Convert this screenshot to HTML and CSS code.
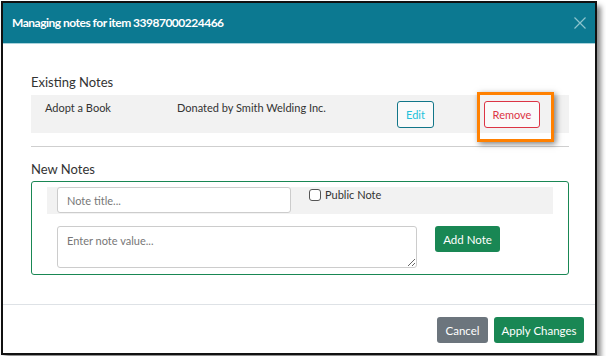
FILE: index.html
```html
<!DOCTYPE html>
<html lang="en">
<head>
    <meta charset="UTF-8">
    <title>Managing notes</title>
    <link rel="stylesheet" href="styles.css">
</head>
<body>
    <div class="nt-modal">
        <div class="nt-header">
            <h1 class="nt-title">Managing notes for item 33987000224466</h1>
            <svg class="nt-close" width="12" height="12" viewBox="0 0 12 12">
                <path d="M0.5 0.5 L11.5 11.5 M11.5 0.5 L0.5 11.5" stroke="#8cc4ce" stroke-width="1.2" fill="none"/>
            </svg>
        </div>

        <div class="nt-body">
            <h2 class="nt-label">Existing Notes</h2>
            <div class="nt-note-row">
                <span class="nt-cell">Adopt a Book</span>
                <span class="nt-cell">Donated by Smith Welding Inc.</span>
                <div><button class="nt-btn nt-btn-edit">Edit</button></div>
                <div><button class="nt-btn nt-btn-remove">Remove</button></div>
            </div>
            <hr class="nt-rule">

            <h2 class="nt-label">New Notes</h2>
            <div class="nt-new-box">
                <div class="nt-new-top">
                    <input type="text" class="nt-input" placeholder="Note title...">
                    <label class="nt-check">
                        <span class="nt-checkbox"></span>
                        Public Note
                    </label>
                </div>
                <div class="nt-new-bottom">
                    <textarea class="nt-textarea" placeholder="Enter note value..."></textarea>
                    <button class="nt-btn nt-btn-add">Add Note</button>
                </div>
            </div>
        </div>

        <div class="nt-footer">
            <button class="nt-btn nt-btn-cancel">Cancel</button>
            <button class="nt-btn nt-btn-apply">Apply Changes</button>
        </div>
    </div>
</body>
</html>
```

FILE: styles.css
```css
:root {
    --nt-teal: #0c7991;
    --nt-green: #198754;
    --nt-gray: #6c757d;
    --nt-row: #f2f2f2;
    --nt-text: #333;
}

* {
    margin: 0;
    padding: 0;
    box-sizing: border-box;
}

body {
    font-family: Lato, "Open Sans", Arial, sans-serif;
    background: #fff;
    color: var(--nt-text);
    padding: 1px;
}

.nt-modal {
    width: 596px;
    height: 354px;
    border: 2px solid #111;
    background: #fff;
    box-shadow: 4px 5px 5px rgba(0,0,0,0.45);
    display: flex;
    flex-direction: column;
}

.nt-header {
    height: 41px;
    background: var(--nt-teal);
    border-bottom: 1px solid #a9d3dc;
    display: flex;
    align-items: center;
    justify-content: space-between;
    padding: 0 9px 1px 9px;
}

.nt-title {
    font-size: 12px;
    font-weight: 700;
    letter-spacing: -0.5px;
    color: #fff;
}

.nt-close {
    margin-right: 0;
}

.nt-body {
    padding: 29px 26px 0 28px;
    flex: 1;
    border-bottom: 1px solid #dee2e6;
}

.nt-label {
    font-size: 13px;
    font-weight: 400;
    line-height: 18px;
    color: var(--nt-text);
    margin-bottom: 4px;
}

.nt-note-row {
    background: var(--nt-row);
    height: 38px;
    padding: 6px 0 0 14px;
    display: grid;
    grid-template-columns: 132px 220px 87px 1fr;
    font-size: 11px;
    line-height: 14px;
}

.nt-btn {
    font-family: inherit;
    font-size: 11px;
    border-radius: 3px;
    cursor: pointer;
}

.nt-btn-edit {
    width: 37px;
    height: 27px;
    background: #fafafa;
    border: 1px solid #127689;
    color: #23c2db;
}

.nt-btn-remove {
    position: relative;
    width: 56px;
    height: 27px;
    background: #fafafa;
    border: 1px solid #dc3545;
    color: #dc3545;
}

/* highlight frame around the remove button */
.nt-btn-remove::after {
    content: '';
    position: absolute;
    left: -8px;
    top: -10px;
    width: 71px;
    height: 44px;
    border: 3px solid #ff8000;
    box-shadow: 2px 2px 6px rgba(0,0,0,0.5);
}

.nt-rule {
    border: none;
    border-top: 1px solid #cfcfcf;
    margin: 13px 0 13px 0;
}

.nt-new-box {
    margin-top: -1px;
    height: 94px;
    border: 1px solid var(--nt-green);
    border-radius: 3px;
    padding: 5px 15px 0 15px;
}

.nt-new-top {
    background: var(--nt-row);
    height: 27px;
    padding-left: 10px;
    display: flex;
    align-items: flex-start;
    gap: 18px;
}

.nt-input {
    width: 234px;
    height: 26px;
    border: 1px solid #ccc;
    border-radius: 3px;
    padding: 0 9px;
    font-family: inherit;
    font-size: 11px;
    color: var(--nt-text);
}

.nt-input::placeholder,
.nt-textarea::placeholder {
    color: #777;
}

.nt-check {
    display: flex;
    align-items: center;
    gap: 4px;
    font-size: 11px;
    margin-top: 1px;
    line-height: 14px;
}

.nt-checkbox {
    width: 12px;
    height: 12px;
    border: 1px solid #555;
    border-radius: 3px;
    background: #fff;
}

.nt-new-bottom {
    display: flex;
    align-items: flex-start;
    gap: 18px;
    padding-left: 10px;
    margin-top: 12px;
}

.nt-textarea {
    width: 360px;
    height: 42px;
    border: 1px solid #ccc;
    border-radius: 3px;
    padding: 7px 9px;
    font-family: inherit;
    font-size: 11px;
    resize: both;
}

.nt-btn-add {
    width: 65px;
    height: 26px;
    background: var(--nt-green);
    border: none;
    color: #fff;
    font-size: 11.5px;
}

.nt-footer {
    display: flex;
    justify-content: flex-end;
    gap: 6px;
    padding: 12px 11px 0 0;
    height: 48px;
}

.nt-btn-cancel {
    width: 51px;
    height: 26px;
    background: var(--nt-gray);
    border: none;
    color: #fff;
    font-size: 11.5px;
}

.nt-btn-apply {
    width: 90px;
    height: 26px;
    background: var(--nt-green);
    border: none;
    color: #fff;
    font-size: 11.5px;
}
```
